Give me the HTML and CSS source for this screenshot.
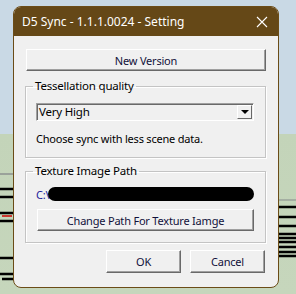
FILE: index.html
```html
<!DOCTYPE html>
<html lang="en">
<head>
  <meta charset="UTF-8">
  <title>D5 Sync - Setting</title>
  <link rel="stylesheet" href="styles.css">
</head>
<body>
  <svg class="sketch" width="296" height="294" viewBox="0 0 296 294">
    <g stroke="#000" stroke-width="2.5" fill="none">
      <path d="M0 189 H14"/>
      <path d="M0 197 H14"/>
      <path d="M0 213 H14"/>
      <path d="M0 221 H14"/>
      <path d="M0 258 H14"/>
      <path d="M0 274 H14 M2 279 H14"/>
      <path d="M278 207 H296"/>
      <path d="M278 217 H296"/>
      <path d="M278 226 H296"/>
      <path d="M278 234 H296 M278 238 H296 M278 242 H296"/>
      <path d="M278 247 H296 M278 252 H296 M278 256 H296"/>
    </g>
    <path d="M2 216 H12" stroke="#c00" stroke-width="1.5"/>
    <path d="M0 174 H14" stroke="#9aa29a" stroke-width="2"/>
    <path d="M278 200 H296" stroke="#9aa29a" stroke-width="1.5"/>
  </svg>

  <div class="window">
    <div class="titlebar">
      <span class="title">D5 Sync - 1.1.1.0024 - Setting</span>
      <svg class="close" width="12" height="12" viewBox="0 0 12 12">
        <path d="M1 1 L11 11 M11 1 L1 11" stroke="#fff" stroke-width="1.1"/>
      </svg>
    </div>

    <div class="content">
      <button class="btn wide">New Version</button>

      <fieldset class="group first">
        <legend>Tessellation quality</legend>
        <div class="combo">
          <span class="combo-value">Very High</span>
          <span class="combo-arrow">
            <svg width="8" height="4" viewBox="0 0 8 4"><path d="M0 0 H8 L4 4 Z" fill="#000"/></svg>
          </span>
        </div>
        <p class="hint">Choose sync with less scene data.</p>
      </fieldset>

      <fieldset class="group second">
        <legend>Texture Image Path</legend>
        <p class="path">C:\<span class="blot"></span></p>
        <button class="btn inner">Change Path For Texture Iamge</button>
      </fieldset>

      <div class="actions">
        <button class="btn action">OK</button>
        <button class="btn action">Cancel</button>
      </div>
    </div>
  </div>
</body>
</html>
```

FILE: styles.css
```css
body {
  margin: 0;
  width: 296px;
  height: 294px;
  overflow: hidden;
  background: linear-gradient(#c9d9e5 0, #c9d9e5 134px, #c3d4b9 134px, #c6d6bc 100%);
  font-family: "Noto Sans", "Open Sans", sans-serif;
  font-size: 11px;
  letter-spacing: -0.2px;
  color: #000;
}

.sketch {
  position: absolute;
  left: 0;
  top: 0;
}

.window {
  position: relative;
  margin: 6px 0 0 13px;
  width: 266px;
  height: 282px;
  box-sizing: border-box;
  border: 1px solid #6b4c17;
  border-radius: 8px;
  background-color: #f0f0f0;
  overflow: hidden;
}

.titlebar {
  height: 29px;
  background-color: #654817;
  color: #fff;
  display: flex;
  align-items: center;
  justify-content: space-between;
  padding: 0 8px 0 8px;
}

.title {
  font-size: 12px;
  letter-spacing: 0;
}

.close {
  margin-right: 2px;
}

.content {
  padding: 13px 12px 0 12px;
}

.btn {
  display: block;
  font-family: inherit;
  font-size: 11px;
  letter-spacing: -0.2px;
  color: #10103a;
  background-color: #f0f0f0;
  border-style: solid;
  border-width: 1px;
  border-color: #fff #696969 #696969 #fff;
  box-shadow: inset -1px -1px 0 #a0a0a0;
  padding: 0;
  cursor: pointer;
}

.wide {
  width: 240px;
  height: 22px;
}

.group {
  margin: 0;
  padding: 0 10px 0 10px;
  border: 1px solid #c4c4c4;
  box-shadow: inset 1px 1px 0 #fff, 1px 1px 0 #fff;
}

.group legend {
  padding: 0 2px;
  margin-left: -3px;
  font-size: 11.5px;
  line-height: 14px;
}

.first {
  margin-top: 8px;
  width: 241px;
  height: 79px;
  box-sizing: border-box;
  margin-left: -1px;
}

.second {
  margin-top: 6px;
  width: 241px;
  height: 79px;
  box-sizing: border-box;
  margin-left: -1px;
}

.combo {
  margin-top: 10px;
  width: 218px;
  height: 18px;
  box-sizing: border-box;
  display: flex;
  align-items: center;
  justify-content: space-between;
  background-color: #f0f0f0;
  border-style: solid;
  border-width: 1px;
  border-color: #a0a0a0 #fff #fff #a0a0a0;
  box-shadow: inset 1px 1px 0 #696969;
}

.combo-value {
  padding-left: 2px;
  font-size: 11.5px;
  line-height: 16px;
}

.combo-arrow {
  width: 15px;
  height: 14px;
  margin-right: 1px;
  box-sizing: border-box;
  display: flex;
  align-items: center;
  justify-content: center;
  border-style: solid;
  border-width: 1px;
  border-color: #fff #696969 #696969 #fff;
}

.hint {
  margin: 10px 0 0 0;
}

.path {
  margin: 8px 0 0 0;
  color: #23239a;
  height: 16px;
  display: flex;
  align-items: center;
}

.blot {
  display: inline-block;
  width: 206px;
  height: 14px;
  margin-left: -1px;
  background-color: #000;
  border-radius: 8px;
}

.inner {
  margin-top: 7px;
  width: 217px;
  height: 22px;
  margin-left: 1px;
}

.actions {
  display: flex;
  justify-content: flex-end;
  gap: 9px;
  margin-top: 7px;
  padding-right: 1px;
}

.action {
  width: 75px;
  height: 23px;
}
```
